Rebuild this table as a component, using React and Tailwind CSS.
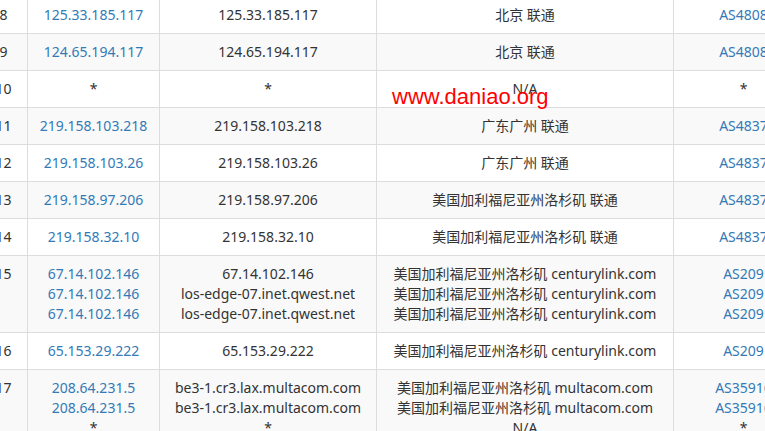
import React from "react";

const LA = "美国加利福尼亚州洛杉矶";

const hops = [
  { n: 8, ip: ["125.33.185.117"], host: ["125.33.185.117"], geo: ["北京 联通"], as: ["AS4808"] },
  { n: 9, ip: ["124.65.194.117"], host: ["124.65.194.117"], geo: ["北京 联通"], as: ["AS4808"] },
  { n: 10, ip: ["*"], host: ["*"], geo: ["N/A"], as: ["*"] },
  { n: 11, ip: ["219.158.103.218"], host: ["219.158.103.218"], geo: ["广东广州 联通"], as: ["AS4837"] },
  { n: 12, ip: ["219.158.103.26"], host: ["219.158.103.26"], geo: ["广东广州 联通"], as: ["AS4837"] },
  { n: 13, ip: ["219.158.97.206"], host: ["219.158.97.206"], geo: [LA + " 联通"], as: ["AS4837"] },
  { n: 14, ip: ["219.158.32.10"], host: ["219.158.32.10"], geo: [LA + " 联通"], as: ["AS4837"] },
  {
    n: 15,
    ip: ["67.14.102.146", "67.14.102.146", "67.14.102.146"],
    host: ["67.14.102.146", "los-edge-07.inet.qwest.net", "los-edge-07.inet.qwest.net"],
    geo: [LA + " centurylink.com", LA + " centurylink.com", LA + " centurylink.com"],
    as: ["AS209", "AS209", "AS209"],
  },
  { n: 16, ip: ["65.153.29.222"], host: ["65.153.29.222"], geo: [LA + " centurylink.com"], as: ["AS209"] },
  {
    n: 17,
    ip: ["208.64.231.5", "208.64.231.5", "*"],
    host: ["be3-1.cr3.lax.multacom.com", "be3-1.cr3.lax.multacom.com", "*"],
    geo: [LA + " multacom.com", LA + " multacom.com", "N/A"],
    as: ["AS35916", "AS35916", "*"],
  },
];

function Lines({ items, link }) {
  return items.map((t, i) => (
    <div
      key={i}
      className={link && t !== "*" ? "text-[#337ab7] whitespace-nowrap" : "whitespace-nowrap"}
    >
      {t}
    </div>
  ));
}

export default function App() {
  return (
    <div
      className="relative w-[765px] h-[431px] overflow-hidden bg-white text-[#333] text-[14px] leading-[20px]"
      style={{ fontFamily: '"Noto Sans", "Noto Sans CJK SC", sans-serif' }}
    >
      <div className="w-[834px] -ml-[21px] -mt-[4px] border-t border-r border-[#ddd] grid grid-cols-[48px_132px_217px_297px_140px]">
        {hops.map((h) => {
          const bg = h.n % 2 === 1 ? "bg-[#f9f9f9]" : "bg-white";
          const cell = `border-l border-b border-[#ddd] p-2 text-center ${bg}`;
          return (
            <React.Fragment key={h.n}>
              <div className={cell}>{h.n}</div>
              <div className={cell}>
                <Lines items={h.ip} link />
              </div>
              <div className={cell}>
                <Lines items={h.host} />
              </div>
              <div className={cell}>
                <Lines items={h.geo} />
              </div>
              <div className={cell}>
                <Lines items={h.as} link />
              </div>
            </React.Fragment>
          );
        })}
      </div>

      {/* watermark */}
      <div
        className="absolute left-[392px] top-[86px] text-[22px] leading-none text-[#ff0000] whitespace-nowrap"
        style={{ fontFamily: '"Liberation Sans", Arial, sans-serif' }}
      >
        www.daniao.org
      </div>
    </div>
  );
}
